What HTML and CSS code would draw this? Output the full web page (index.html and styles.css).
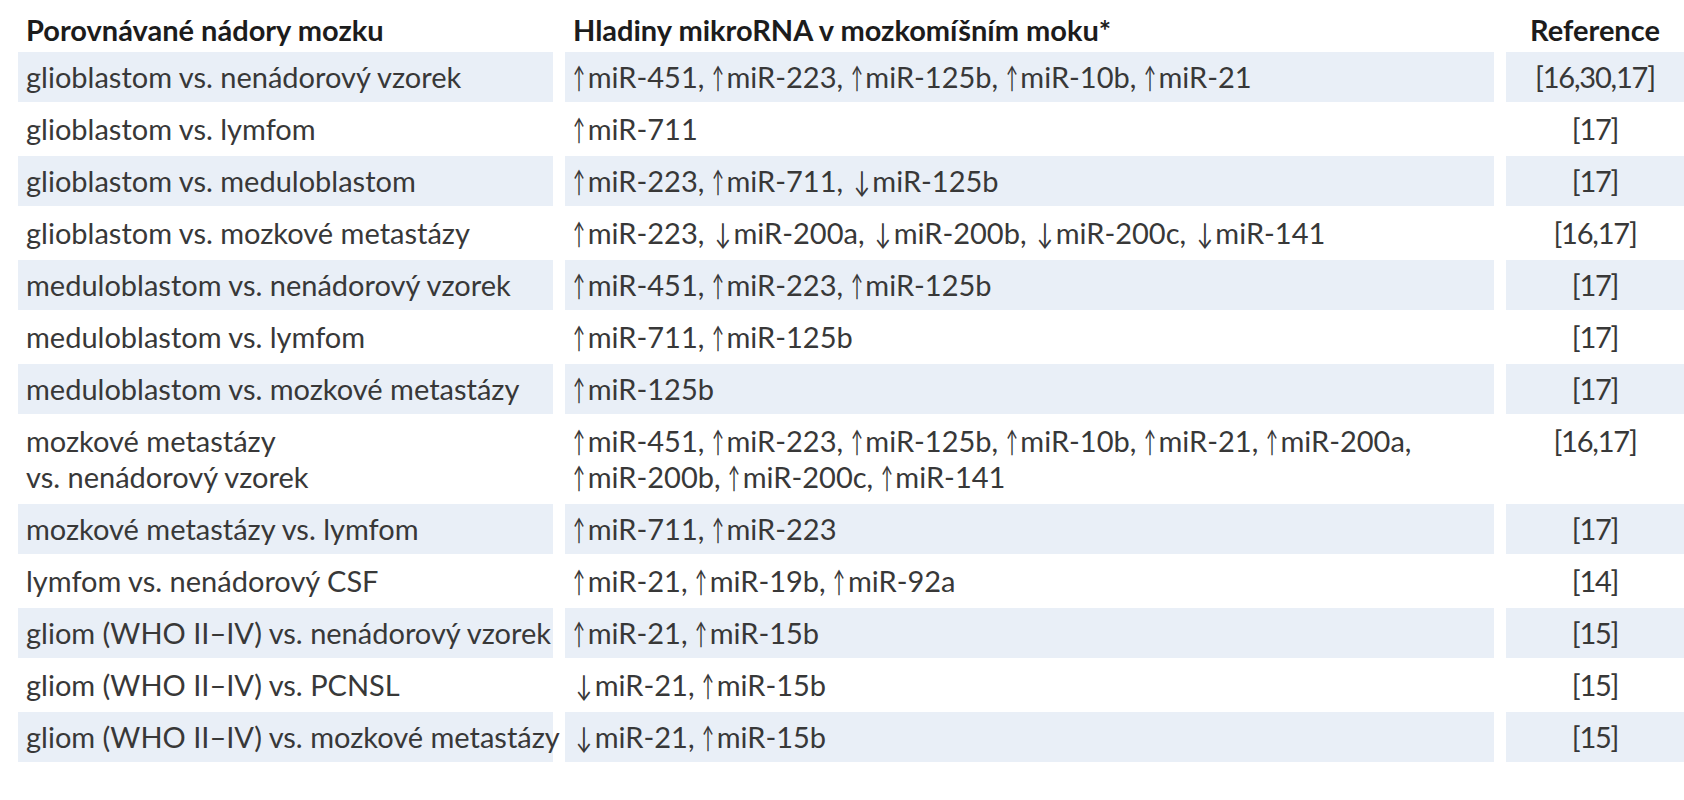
FILE: index.html
```html
<!DOCTYPE html>
<html lang="cs">
<head>
<meta charset="utf-8">
<title>MikroRNA v mozkomíšním moku</title>
<link rel="stylesheet" href="styles.css">
</head>
<body>
<div class="tbl">
  <div class="c h">Porovnávané nádory mozku</div>
  <div class="c h">Hladiny mikroRNA v mozkomíšním moku*</div>
  <div class="c h r">Reference</div>

  <div class="c s">glioblastom vs. nenádorový vzorek</div>
  <div class="c s"><span class="up">↑</span>miR-451, <span class="up">↑</span>miR-223, <span class="up">↑</span>miR-125b, <span class="up">↑</span>miR-10b, <span class="up">↑</span>miR-21</div>
  <div class="c s r">[16,30,17]</div>

  <div class="c">glioblastom vs. lymfom</div>
  <div class="c"><span class="up">↑</span>miR-711</div>
  <div class="c r">[17]</div>

  <div class="c s">glioblastom vs. meduloblastom</div>
  <div class="c s"><span class="up">↑</span>miR-223, <span class="up">↑</span>miR-711, <span class="dn">↓</span>miR-125b</div>
  <div class="c s r">[17]</div>

  <div class="c">glioblastom vs. mozkové metastázy</div>
  <div class="c"><span class="up">↑</span>miR-223, <span class="dn">↓</span>miR-200a, <span class="dn">↓</span>miR-200b, <span class="dn">↓</span>miR-200c, <span class="dn">↓</span>miR-141</div>
  <div class="c r">[16,17]</div>

  <div class="c s">meduloblastom vs. nenádorový vzorek</div>
  <div class="c s"><span class="up">↑</span>miR-451, <span class="up">↑</span>miR-223, <span class="up">↑</span>miR-125b</div>
  <div class="c s r">[17]</div>

  <div class="c">meduloblastom vs. lymfom</div>
  <div class="c"><span class="up">↑</span>miR-711, <span class="up">↑</span>miR-125b</div>
  <div class="c r">[17]</div>

  <div class="c s">meduloblastom vs. mozkové metastázy</div>
  <div class="c s"><span class="up">↑</span>miR-125b</div>
  <div class="c s r">[17]</div>

  <div class="c">mozkové metastázy<br>vs. nenádorový vzorek</div>
  <div class="c"><span class="up">↑</span>miR-451, <span class="up">↑</span>miR-223, <span class="up">↑</span>miR-125b, <span class="up">↑</span>miR-10b, <span class="up">↑</span>miR-21, <span class="up">↑</span>miR-200a,<br><span class="up">↑</span>miR-200b, <span class="up">↑</span>miR-200c, <span class="up">↑</span>miR-141</div>
  <div class="c r">[16,17]</div>

  <div class="c s">mozkové metastázy vs. lymfom</div>
  <div class="c s"><span class="up">↑</span>miR-711, <span class="up">↑</span>miR-223</div>
  <div class="c s r">[17]</div>

  <div class="c">lymfom vs. nenádorový CSF</div>
  <div class="c"><span class="up">↑</span>miR-21, <span class="up">↑</span>miR-19b, <span class="up">↑</span>miR-92a</div>
  <div class="c r">[14]</div>

  <div class="c s">gliom (WHO II–IV) vs. nenádorový vzorek</div>
  <div class="c s"><span class="up">↑</span>miR-21, <span class="up">↑</span>miR-15b</div>
  <div class="c s r">[15]</div>

  <div class="c">gliom (WHO II–IV) vs. PCNSL</div>
  <div class="c"><span class="dn">↓</span>miR-21, <span class="up">↑</span>miR-15b</div>
  <div class="c r">[15]</div>

  <div class="c s">gliom (WHO II–IV) vs. mozkové metastázy</div>
  <div class="c s"><span class="dn">↓</span>miR-21, <span class="up">↑</span>miR-15b</div>
  <div class="c s r">[15]</div>
</div>
</body>
</html>
```
FILE: styles.css
```css
html, body {
  margin: 0;
  padding: 0;
  background: #ffffff;
  overflow: hidden;
}
body {
  font-family: Lato, "Open Sans", "DejaVu Sans", sans-serif;
  font-size: 29px;
  color: #383838;
}
.tbl {
  display: grid;
  grid-template-columns: 535px 929px 1fr;
  column-gap: 12px;
  row-gap: 2px;
  padding-left: 18px;
}
.c {
  padding: 7px 8px;
  line-height: 36px;
  white-space: nowrap;
}
.s {
  background: #e9eff7;
}
.h {
  font-weight: 700;
  color: #1c1c1c;
  padding-top: 12px;
  padding-bottom: 2px;
}
.r {
  text-align: center;
  letter-spacing: -1.2px;
}
.h.r {
  letter-spacing: 0;
}
.up {
  display: inline-block;
  transform: scaleX(0.55);
  transform-origin: left center;
  margin-right: -7px;
}
.dn {
  display: inline-block;
  transform: scaleX(0.75);
  transform-origin: center center;
}
```
